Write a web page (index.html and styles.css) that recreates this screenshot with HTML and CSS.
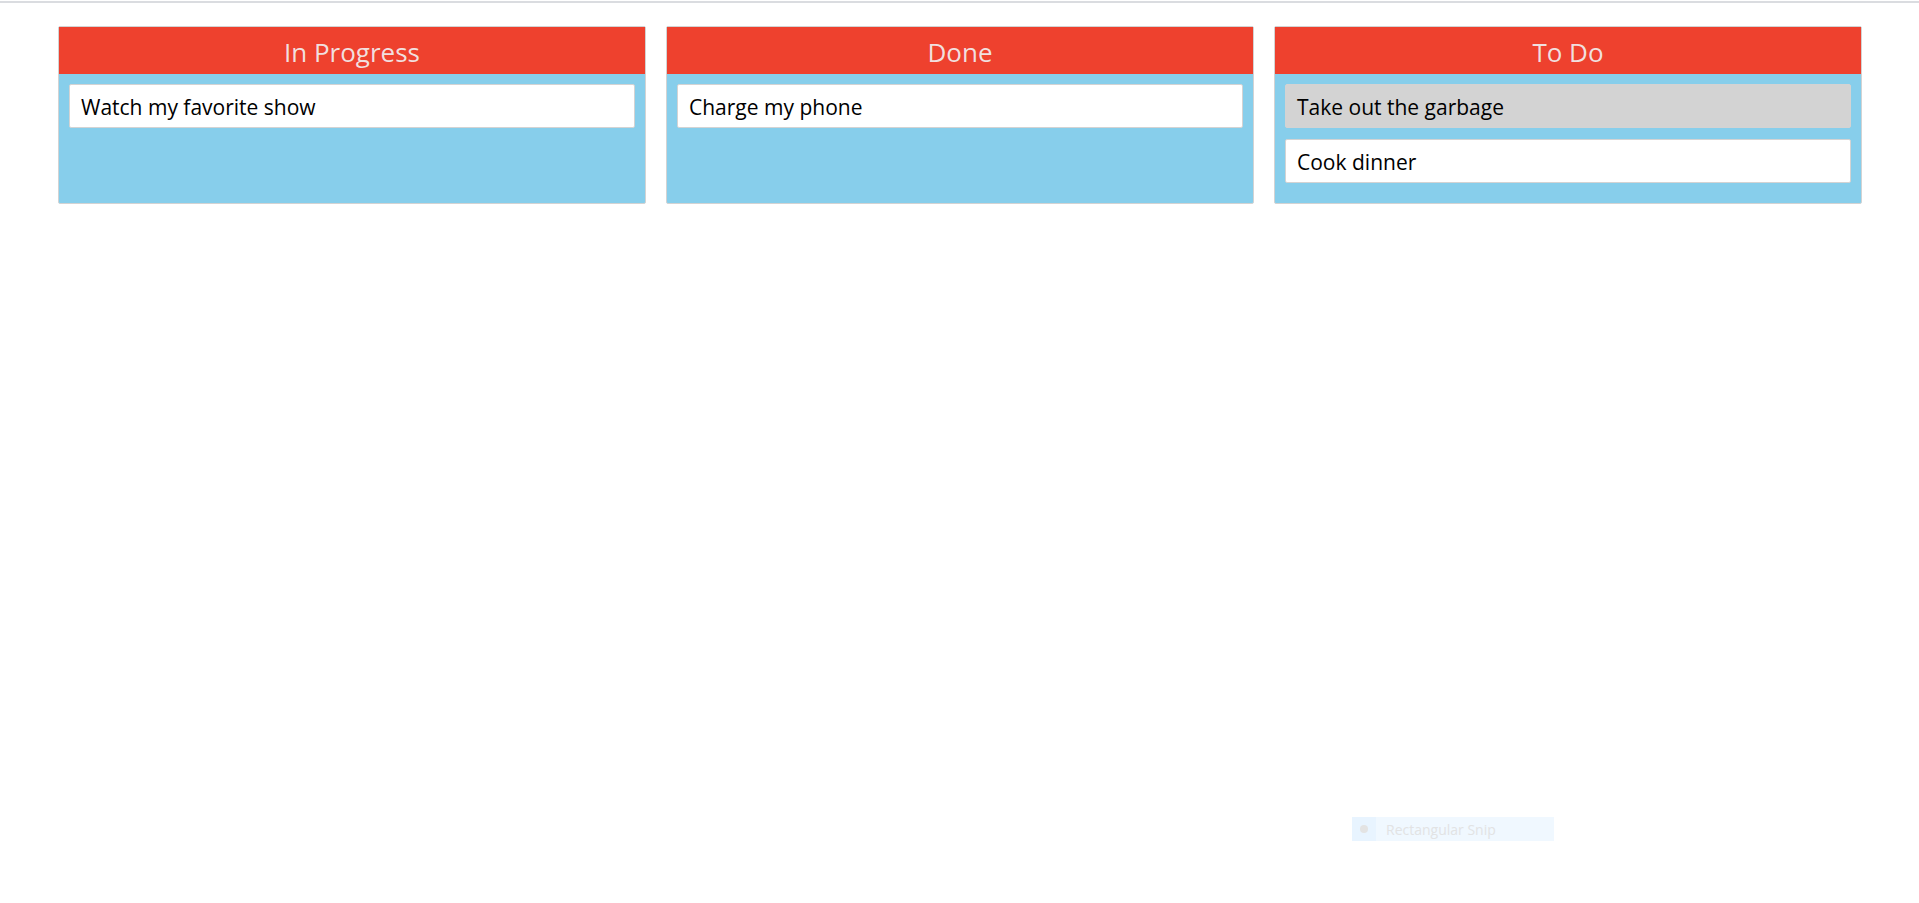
FILE: index.html
```html
<!DOCTYPE html>
<html lang="en">
<head>
<meta charset="utf-8">
<title>Task Board</title>
<link rel="stylesheet" href="styles.css">
</head>
<body>
<main class="board">
  <section class="column">
    <h2 class="column-title">In Progress</h2>
    <ul class="cards">
      <li class="card">Watch my favorite show</li>
    </ul>
  </section>
  <section class="column">
    <h2 class="column-title">Done</h2>
    <ul class="cards">
      <li class="card">Charge my phone</li>
    </ul>
  </section>
  <section class="column">
    <h2 class="column-title">To Do</h2>
    <ul class="cards">
      <li class="card card-active">Take out the garbage</li>
      <li class="card">Cook dinner</li>
    </ul>
  </section>
</main>
<div class="snip">
  <span class="snip-mark"><span class="snip-dot"></span></span>
  <span class="snip-label">Rectangular Snip</span>
</div>
</body>
</html>
```
FILE: styles.css
```css
* {
  box-sizing: border-box;
}

body {
  margin: 0;
  padding-top: 1px;
  background: #fff;
  color: #000;
  font-family: "Segoe UI", "Open Sans", "Noto Sans", sans-serif;
}

.board {
  display: grid;
  grid-template-columns: repeat(3, 1fr);
  gap: 20px;
  padding: 23px 57px 0 58px;
  border-top: 2px solid #dadce0;
}

.column {
  border: 1px solid #d3d3d3;
  border-radius: 2px;
  background: #87ceeb;
}

.column-title {
  margin: 0;
  padding: 7px 0 4px;
  background: #ee412e;
  color: #f1dfdf;
  font-size: 26px;
  font-weight: 400;
  line-height: 36px;
  text-align: center;
}

.cards {
  display: grid;
  gap: 11px;
  margin: 0;
  padding: 10px 10px 20px;
  list-style: none;
}

.card {
  padding: 7px 11px 5px;
  border: 1px solid #d3d3d3;
  border-radius: 2px;
  background: #fff;
  font-size: 21px;
  line-height: 30px;
}

.card-active {
  background: #d3d3d3;
}

.snip {
  position: fixed;
  right: 365px;
  bottom: 62px;
  display: flex;
  width: 202px;
  height: 24px;
  background: #f0f8ff;
  color: #e2e3e4;
  font-size: 14px;
  line-height: 26px;
}

.snip-mark {
  display: flex;
  align-items: center;
  justify-content: center;
  width: 24px;
  background: #e8f4ff;
}

.snip-dot {
  width: 8px;
  height: 8px;
  border-radius: 50%;
  background: #e3e3e3;
}

.snip-label {
  padding-left: 10px;
}
```
